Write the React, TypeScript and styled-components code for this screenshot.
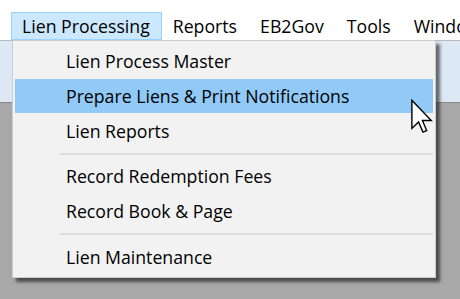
import React from 'react';
import styled, { createGlobalStyle } from 'styled-components';

const GlobalStyle = createGlobalStyle`
  html, body {
    margin: 0;
    padding: 0;
    background: #ffffff;
  }
  body {
    font-family: "Segoe UI", "Open Sans", "Liberation Sans", sans-serif;
  }
`;

const Screen = styled.div`
  position: relative;
  width: 460px;
  height: 299px;
  overflow: hidden;
  display: flex;
  flex-direction: column;
  background: #a8a8a8;
`;

const MenuBar = styled.nav`
  display: flex;
  align-items: stretch;
  height: 28px;
  padding: 12px 0 0 11px;
  background: #ffffff;
  border-bottom: 1px solid #b9b9b9;
  overflow: hidden;
`;

const BarItem = styled.div<{ $open?: boolean }>`
  display: flex;
  align-items: center;
  flex-shrink: 0;
  padding: 0 11px 0 10px;
  font-size: 17.7px;
  color: #000;
  white-space: nowrap;
  border: 1px solid ${(p) => (p.$open ? '#99d1ff' : 'transparent')};
  background: ${(p) => (p.$open ? '#cce8ff' : 'transparent')};
`;

const ToolStrip = styled.div`
  height: 61px;
  background: #dce8f4;
  border-bottom: 1px solid #8a8a8a;
`;

const MdiArea = styled.div`
  flex: 1;
  background: #a8a8a8;
`;

const Dropdown = styled.div`
  position: absolute;
  left: 12px;
  top: 40px;
  width: 424px;
  padding: 3px 2px;
  box-sizing: border-box;
  background: #f2f2f2;
  border: 1px solid #cccccc;
  box-shadow: 4px 4px 3px rgba(0, 0, 0, 0.55);
  display: flex;
  flex-direction: column;
`;

const Item = styled.div<{ $active?: boolean }>`
  height: 34.7px;
  flex-shrink: 0;
  display: flex;
  align-items: center;
  padding-left: 51px;
  font-size: 17.7px;
  color: #000;
  white-space: nowrap;
  background: ${(p) => (p.$active ? '#91c9f7' : 'transparent')};
`;

const Separator = styled.div`
  height: 11px;
  flex-shrink: 0;
  display: flex;
  align-items: center;
  padding-left: 45px;

  &::after {
    content: '';
    flex: 1;
    height: 2px;
    background: #dcdcdc;
  }
`;

const Cursor = styled.svg`
  position: absolute;
  left: 411px;
  top: 99px;
`;

type Entry = { label: string; active?: boolean } | 'sep';

const entries: Entry[] = [
  { label: 'Lien Process Master' },
  { label: 'Prepare Liens & Print Notifications', active: true },
  { label: 'Lien Reports' },
  'sep',
  { label: 'Record Redemption Fees' },
  { label: 'Record Book & Page' },
  'sep',
  { label: 'Lien Maintenance' },
];

const menus = ['Lien Processing', 'Reports', 'EB2Gov', 'Tools', 'Window'];

const App: React.FC = () => (
  <>
    <GlobalStyle />
    <Screen>
      <MenuBar>
        {menus.map((m, i) => (
          <BarItem key={m} $open={i === 0}>
            {m}
          </BarItem>
        ))}
      </MenuBar>
      <ToolStrip />
      <MdiArea />
      <Dropdown>
        {entries.map((e, i) =>
          e === 'sep' ? (
            <Separator key={i} />
          ) : (
            <Item key={i} $active={e.active}>
              {e.label}
            </Item>
          )
        )}
      </Dropdown>
      <Cursor width="22" height="36" viewBox="0 0 12.5 20">
        <path
          d="M0.5 0.5 L0.5 16.5 L4.3 12.8 L6.8 18.6 L8.9 17.7 L6.5 12 L11.5 12 Z"
          fill="#fff"
          stroke="#000"
          strokeWidth="0.8"
          strokeLinejoin="miter"
        />
      </Cursor>
    </Screen>
  </>
);

export default App;
